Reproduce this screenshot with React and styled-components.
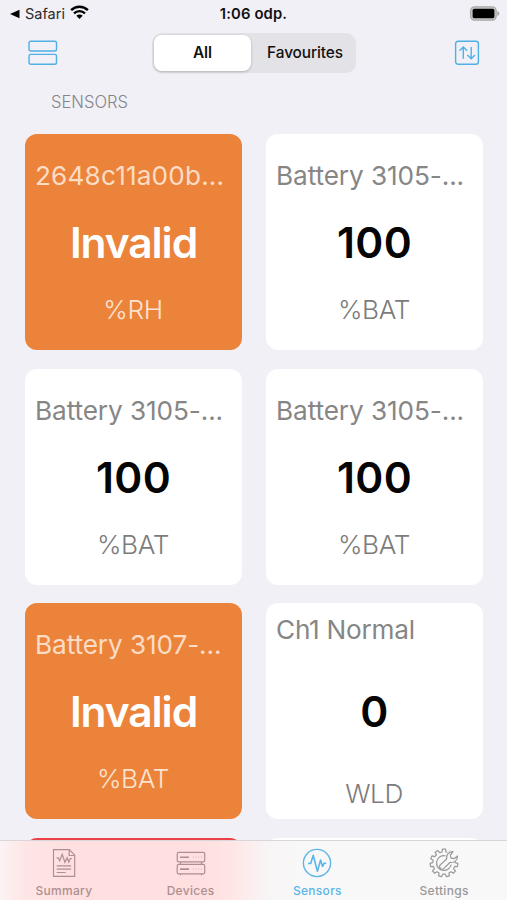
import React from "react";

import styled, { createGlobalStyle } from "styled-components";

const GlobalStyle = createGlobalStyle`
  * {
    box-sizing: border-box;
  }
  body {
    margin: 0;
    background-color: #f1f0f6;
    font-family: Inter, "Liberation Sans", sans-serif;
  }
  svg {
    display: block;
  }
  button {
    border: none;
    padding: 0;
    background: none;
    font-family: inherit;
  }
`;

const Screen = styled.div`
  display: flex;
  flex-direction: column;
  width: 507px;
  height: 900px;
  overflow: hidden;
`;

const StatusBar = styled.div`
  display: grid;
  grid-template-columns: 1fr auto 1fr;
  align-items: center;
  height: 27px;
  padding: 0 7px 0 10px;
  color: #111114;
`;

const BackTo = styled.div`
  display: flex;
  align-items: center;
  font-size: 14.5px;
  color: #2b2b2e;
  svg:last-child {
    margin-top: -2px;
  }
  span {
    margin: 0 5px 0 5px;
  }
`;

const Clock = styled.div`
  font-size: 14.8px;
  font-weight: 600;
  letter-spacing: 0.15px;
  margin-right: 3px;
`;

const Battery = styled.div`
  justify-self: end;
`;

const Toolbar = styled.div`
  display: grid;
  grid-template-columns: 1fr auto 1fr;
  align-items: center;
  height: 51px;
  padding: 0 27px 0 28px;
`;

const IconButton = styled.button`
  justify-self: ${(props) => (props.$end ? "end" : "start")};
`;

const Segmented = styled.div`
  display: flex;
  width: 204px;
  height: 40px;
  padding: 2px;
  border-radius: 10px;
  background-color: #e3e2e6;
`;

const Segment = styled.button`
  width: ${(props) => (props.$active ? "97px" : "103px")};
  padding-left: ${(props) => (props.$active ? "0" : "5px")};
  border-radius: 8px;
  font-size: 15.4px;
  font-weight: ${(props) => (props.$active ? 600 : 500)};
  letter-spacing: -0.1px;
  color: #111;
  background-color: ${(props) => (props.$active ? "#fff" : "transparent")};
  box-shadow: ${(props) =>
    props.$active ? "0 1px 3px rgba(0, 0, 0, 0.22)" : "none"};
`;

const Heading = styled.h2`
  margin: 0;
  height: 56px;
  padding: 14px 0 0 51px;
  font-size: 16.6px;
  line-height: 20px;
  font-weight: 300;
  letter-spacing: 0;
  color: #85858a;
`;

const Grid = styled.div`
  flex: 1;
  min-height: 0;
  overflow: hidden;
  display: grid;
  grid-template-columns: 217px 217px;
  grid-auto-rows: 216px;
  gap: 18.5px 24px;
  padding-left: 25px;
`;

const colors = {
  normal: "#fff",
  warning: "#ec833b",
  alarm: "#ec4046",
};

const Card = styled.div`
  display: flex;
  flex-direction: column;
  justify-content: space-between;
  padding: ${(props) => (props.$spread ? "11px 10px 9px" : "26px 10px 24px")};
  border-radius: 12px;
  text-align: center;
  background-color: ${(props) => colors[props.$status]};
  color: ${(props) => (props.$status === "normal" ? "#050505" : "#fff")};
`;

const CardTitle = styled.div`
  font-size: 26.2px;
  line-height: 32px;
  letter-spacing: ${(props) => props.$spacing || "-0.1px"};
  text-align: left;
  white-space: nowrap;
  color: ${(props) => (props.$light ? "#fbdcc4" : "#868686")};
`;

const CardValue = styled.div`
  font-size: 42.5px;
  line-height: 50px;
  font-weight: 600;
  letter-spacing: ${(props) => (props.$text ? "-1.1px" : "0.4px")};
`;

const CardUnit = styled.div`
  font-size: 26.2px;
  line-height: 32px;
  font-weight: 300;
  letter-spacing: -0.4px;
  padding-right: 1px;
  color: ${(props) => (props.$light ? "#fde3d0" : "#7c7c7c")};
`;

const TabBar = styled.nav`
  display: grid;
  grid-template-columns: repeat(4, 1fr);
  height: 60px;
  border-top: 1px solid #d9d5d8;
  background: linear-gradient(
    90deg,
    #fbf3f4 0,
    #fee6e6 24px,
    #ffdfdf 70px,
    #ffdfdf 200px,
    #fee6e5 232px,
    #f8f5f6 268px,
    #f8f8f8 300px
  );
`;

const Tab = styled.button`
  display: flex;
  flex-direction: column;
  align-items: center;
  padding: 7px 0 0 1px;
  font-size: 12px;
  line-height: 16px;
  font-weight: 500;
  letter-spacing: 0.3px;
  color: ${(props) => props.$color};
  svg {
    margin-bottom: 5px;
  }
`;

const sensors = [
  { name: "2648c11a00b...", value: "Invalid", unit: "%RH", status: "warning", spacing: "0.15px" },
  { name: "Battery 3105-...", value: "100", unit: "%BAT", status: "normal" },
  { name: "Battery 3105-...", value: "100", unit: "%BAT", status: "normal" },
  { name: "Battery 3105-...", value: "100", unit: "%BAT", status: "normal" },
  { name: "Battery 3107-...", value: "Invalid", unit: "%BAT", status: "warning" },
  { name: "Ch1 Normal", value: "0", unit: "WLD", status: "normal", spread: true, spacing: "-0.25px" },
];

function WifiIcon() {
  return (
    <svg width="19" height="15" viewBox="0 0 19 15" fill="none" stroke="#000">
      <path d="M1.1 5.2a12 12 0 0 1 16.8 0" strokeWidth="2.5" />
      <path d="M4 8.4a7.8 7.8 0 0 1 11 0" strokeWidth="2.3" />
      <path d="M9.5 14 6.3 10.8a4.5 4.5 0 0 1 6.4 0z" fill="#000" stroke="none" />
    </svg>
  );
}

function BatteryIcon() {
  return (
    <svg width="31" height="15" viewBox="0 0 31 15">
      <rect x="1.6" y="0.8" width="25.6" height="13.4" rx="4" fill="#c9c9cb" stroke="#a8a8aa" strokeWidth="1.2" />
      <rect x="3.6" y="2.8" width="21.8" height="9.4" rx="1.6" fill="#000" />
      <path d="M28.400 5v5c1.100-.4 1.900-1.300 1.900-2.500S29.500 5.400 28.400 5z" fill="#a2a2a5" />
    </svg>
  );
}

function RowsIcon() {
  return (
    <svg width="30" height="26" viewBox="0 0 30 26" fill="none" stroke="#4fb0e6" strokeWidth="1.4">
      <rect x="1" y="1.2" width="27.5" height="9.8" rx="1.8" />
      <rect x="1" y="14.4" width="27.5" height="9.8" rx="1.8" />
    </svg>
  );
}

function SortIcon() {
  return (
    <svg width="26" height="26" viewBox="0 0 26 26" fill="none" stroke="#4fb0e6" strokeWidth="1.4">
      <rect x="1.6" y="1.2" width="22.8" height="23" rx="2.5" />
      <path d="M9.3 18.700V7M5.500 10.800 9.300 7l3.800 3.800M17.200 7v11.700M13.400 14.900l3.800 3.800 3.800-3.800" />
    </svg>
  );
}

function SummaryIcon() {
  return (
    <svg width="30" height="30" viewBox="0 0 30 30" fill="none" stroke="currentColor" strokeWidth="1.2">
      <path d="M4.5 1.6h15.9l5.300 5.600v21.200H4.500zM20.200 1.800v5.700h5.300" />
      <path d="M7.600 9.800h1.700l1.400 3 2.500-6.500 2.700 8 2.200-4.600 1.700 4.400 1.500-3.600h1.500" />
      <path d="M7.700 17.900h14.400M7.700 21.200h14.400M7.700 24.500h9" />
    </svg>
  );
}

function DevicesIcon() {
  return (
    <svg width="30" height="30" viewBox="0 0 30 30" fill="none" stroke="currentColor" strokeWidth="1.2">
      <rect x="1.2" y="4.400" width="27.500" height="9.500" rx="1.500" />
      <rect x="1.2" y="16.400" width="27.500" height="9.500" rx="1.500" />
      <path d="M4.500 14v2.400M25.500 14v2.400M4.500 26v1.200M25.500 26v1.200" />
      <path d="M4 9.200h9M4 21.100h9" strokeWidth="1.600" />
      <path d="M17 9.200h9M17 21.100h9" strokeDasharray="1 1.700" opacity="0.4" />
    </svg>
  );
}

function SensorsIcon() {
  return (
    <svg width="30" height="30" viewBox="0 0 30 30" fill="none" stroke="currentColor" strokeWidth="1.4" strokeLinejoin="round">
      <circle cx="15" cy="15" r="13.600" />
      <path d="M6 15.500h2.700l2.500-8.200 4.200 15.900 3.200-11.200 2 6.400 1.500-3.100h2.100" strokeWidth="1.6" />
    </svg>
  );
}

const TEETH = 11;

const gearPoint = (tooth, radius, offset) => {
  const angle = ((tooth + offset) / TEETH) * Math.PI * 2 - Math.PI / 2;
  const x = 15 + radius * Math.cos(angle);
  const y = 15 + radius * Math.sin(angle);
  return `${x.toFixed(2)},${y.toFixed(2)}`;
};

const gearPoints = Array.from({ length: TEETH }, (_, i) =>
  [
    gearPoint(i, 11.2, -0.3),
    gearPoint(i, 13.9, -0.2),
    gearPoint(i, 13.9, 0.2),
    gearPoint(i, 11.2, 0.3),
  ].join(" ")
).join(" ");

function SettingsIcon() {
  return (
    <svg width="30" height="30" viewBox="0 0 30 30" fill="none" stroke="currentColor" strokeWidth="1.2" strokeLinejoin="round">
      <polygon points={gearPoints} />
      {/* clear the teeth behind the wrench head */}
      <circle cx="23.500" cy="8" r="6.300" fill="#f8f8f8" stroke="none" />
      <path d="M16.500 7.800a7.400 7.400 0 1 0 5.700 8.700" />
      <path
        d="m11.300 16.900 6.300-5.900c-.7-3.900 2-7.400 6.400-7.400l-2.600 3.500.6 3.100 3.100.5 3.400-2.700c.2 4.400-3.400 7.200-7.300 6.300l-6.500 6.300c-2.400 2-5.500-1.400-3.400-3.700z"
        fill="#f8f8f8"
      />
    </svg>
  );
}

export default function App() {
  return (
    <>
      <GlobalStyle />
      <Screen>
        <StatusBar>
          <BackTo>
            <svg width="10" height="10" viewBox="0 0 10 10">
              <path d="M0 5 9.500.800v8.400z" fill="#000" />
            </svg>
            <span>Safari</span>
            <WifiIcon />
          </BackTo>
          <Clock>1:06 odp.</Clock>
          <Battery>
            <BatteryIcon />
          </Battery>
        </StatusBar>
        <Toolbar>
          <IconButton>
            <RowsIcon />
          </IconButton>
          <Segmented>
            <Segment $active>All</Segment>
            <Segment>Favourites</Segment>
          </Segmented>
          <IconButton $end>
            <SortIcon />
          </IconButton>
        </Toolbar>
        <Heading>SENSORS</Heading>
        <Grid>
          {sensors.map((sensor, i) => (
            <Card key={i} $status={sensor.status} $spread={sensor.spread}>
              <CardTitle
                $light={sensor.status !== "normal"}
                $spacing={sensor.spacing}
              >
                {sensor.name}
              </CardTitle>
              <CardValue $text={sensor.value === "Invalid"}>
                {sensor.value}
              </CardValue>
              <CardUnit $light={sensor.status !== "normal"}>
                {sensor.unit}
              </CardUnit>
            </Card>
          ))}
          <Card $status="alarm" />
          <Card $status="normal" />
        </Grid>
        <TabBar>
          <Tab $color="#ae8f91">
            <SummaryIcon />
            Summary
          </Tab>
          <Tab $color="#ae8f91">
            <DevicesIcon />
            Devices
          </Tab>
          <Tab $color="#5ab5e8">
            <SensorsIcon />
            Sensors
          </Tab>
          <Tab $color="#999">
            <SettingsIcon />
            Settings
          </Tab>
        </TabBar>
      </Screen>
    </>
  );
}
